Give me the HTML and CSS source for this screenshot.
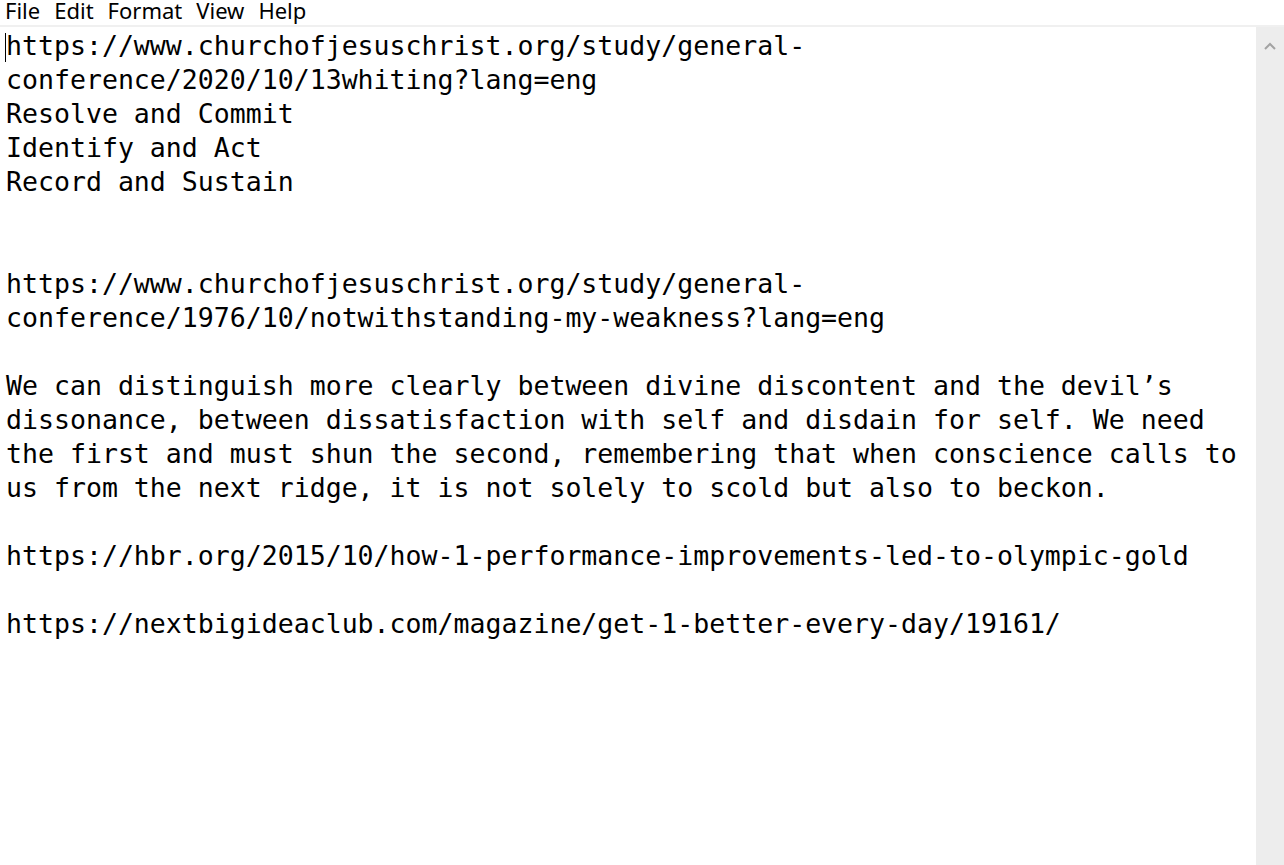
FILE: index.html
```html
<!DOCTYPE html>
<html>
<head>
<meta charset="utf-8">
<link rel="stylesheet" href="styles.css">
</head>
<body>
<div class="window">
  <nav class="menubar">
    <span class="menu">File</span>
    <span class="menu">Edit</span>
    <span class="menu">Format</span>
    <span class="menu">View</span>
    <span class="menu">Help</span>
  </nav>
  <div class="editor">
    <div class="text"><span class="caret"></span><pre class="content">https://www.churchofjesuschrist.org/study/general-
conference/2020/10/13whiting?lang=eng
Resolve and Commit
Identify and Act
Record and Sustain


https://www.churchofjesuschrist.org/study/general-
conference/1976/10/notwithstanding-my-weakness?lang=eng

We can distinguish more clearly between divine discontent and the devil’s
dissonance, between dissatisfaction with self and disdain for self. We need
the first and must shun the second, remembering that when conscience calls to
us from the next ridge, it is not solely to scold but also to beckon.

https://hbr.org/2015/10/how-1-performance-improvements-led-to-olympic-gold

https://nextbigideaclub.com/magazine/get-1-better-every-day/19161/</pre></div>
    <div class="scrollbar">
      <svg class="arrow" width="12" height="8" viewBox="0 0 12 8"><path d="M1 7 L6 2 L11 7" fill="none" stroke="#a3a3a3" stroke-width="2"/></svg>
    </div>
  </div>
</div>
</body>
</html>
```
FILE: styles.css
```css
html, body {
  margin: 0;
  padding: 0;
  background: #fff;
}
.window {
  width: 1284px;
  height: 865px;
  display: flex;
  flex-direction: column;
  overflow: hidden;
}
.menubar {
  height: 25px;
  display: flex;
  align-items: flex-start;
  gap: 14px;
  padding-left: 5px;
  border-bottom: 2px solid #f0f0f0;
  font-family: "Noto Sans", "Open Sans", sans-serif;
  font-size: 22px;
  color: #000;
  box-sizing: content-box;
}
.menu {
  line-height: 21px;
}
.editor {
  flex: 1;
  display: flex;
}
.text {
  flex: 1;
  position: relative;
  padding: 2px 0 0 6px;
}
.caret {
  position: absolute;
  left: 5px;
  top: 6px;
  width: 1px;
  height: 29px;
  background: #000;
}
.content {
  margin: 0;
  font-family: "DejaVu Sans Mono", monospace;
  font-size: 26.55px;
  line-height: 34px;
  color: #000;
  white-space: pre;
}
.scrollbar {
  width: 28px;
  background: #ededed;
  display: flex;
  justify-content: center;
  padding-top: 15px;
  box-sizing: border-box;
}
.arrow {
  display: block;
}
```
